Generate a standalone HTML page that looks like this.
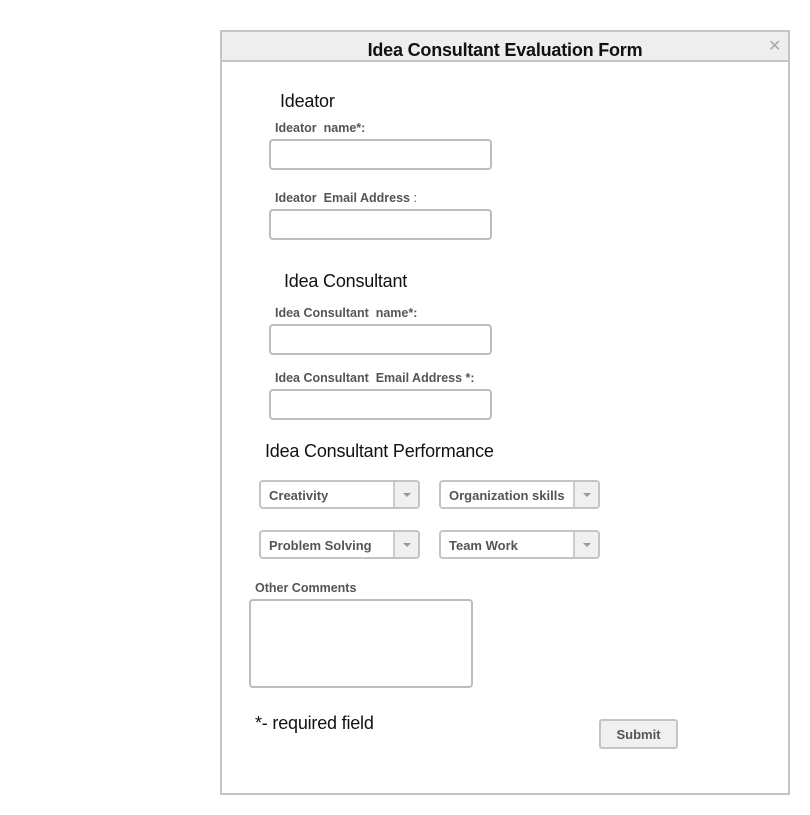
<!DOCTYPE html>
<html><head><meta charset="utf-8"><style>
body{margin:0;width:810px;height:815px;background:#fff;font-family:"Liberation Sans",sans-serif;position:relative;overflow:hidden}
.a{position:absolute}
.dlg{left:220px;top:30px;width:566px;height:761px;border:2px solid #c4c4c4}
.hd{left:220px;top:30px;width:566px;height:28px;background:#eee;border:2px solid #c4c4c4}
.title{left:220px;top:40px;width:570px;text-align:center;font-weight:bold;font-size:18px;color:#111;letter-spacing:-0.2px}
.x{left:768px;top:36px;font-size:16px;color:#aaa}
.h{font-size:18px;color:#111;letter-spacing:-0.2px}
.l{font-size:12.5px;font-weight:bold;color:#555}
.in{border:2px solid #bdbdbd;border-radius:4px;box-sizing:border-box;width:223px;height:31px}
.sel{width:161px;height:29px;border:2px solid #c4c4c4;border-radius:4px;box-sizing:border-box;overflow:hidden}
.sel span{position:absolute;left:8px;top:6px;font-size:13px;font-weight:bold;color:#555}
.sel i{position:absolute;right:0;top:0;width:23px;height:25px;background:#f0f0f0;border-left:2px solid #ccc}
.sel i:after{content:"";position:absolute;left:8px;top:11px;border:4px solid transparent;border-top:4px solid #999}
</style></head><body>
<div class="a dlg"></div>
<div class="a hd"></div>
<div class="a title">Idea Consultant Evaluation Form</div>
<div class="a x">✕</div>

<div class="a h" style="left:280px;top:91px">Ideator</div>
<div class="a l" style="left:275px;top:121px">Ideator&nbsp; name*:</div>
<div class="a in" style="left:269px;top:139px"></div>
<div class="a l" style="left:275px;top:191px">Ideator&nbsp; Email Address<span style="font-weight:normal"> :</span></div>
<div class="a in" style="left:269px;top:209px"></div>

<div class="a h" style="left:284px;top:271px">Idea Consultant</div>
<div class="a l" style="left:275px;top:306px">Idea Consultant&nbsp; name*:</div>
<div class="a in" style="left:269px;top:324px"></div>
<div class="a l" style="left:275px;top:371px">Idea Consultant&nbsp; Email Address *:</div>
<div class="a in" style="left:269px;top:389px"></div>

<div class="a h" style="left:265px;top:441px">Idea Consultant Performance</div>
<div class="a sel" style="left:259px;top:480px"><span>Creativity</span><i></i></div>
<div class="a sel" style="left:439px;top:480px"><span>Organization skills</span><i></i></div>
<div class="a sel" style="left:259px;top:530px"><span>Problem Solving</span><i></i></div>
<div class="a sel" style="left:439px;top:530px"><span>Team Work</span><i></i></div>

<div class="a l" style="left:255px;top:581px">Other Comments</div>
<div class="a" style="left:249px;top:599px;width:224px;height:89px;border:2px solid #bdbdbd;border-radius:4px;box-sizing:border-box"></div>

<div class="a h" style="left:255px;top:713px">*- required field</div>
<div class="a" style="left:599px;top:719px;width:79px;height:30px;box-sizing:border-box;background:#f0f0f0;border:2px solid #c4c4c4;border-radius:3px;text-align:center;font-size:13px;font-weight:bold;color:#555;line-height:28px">Submit</div>
</body></html>
